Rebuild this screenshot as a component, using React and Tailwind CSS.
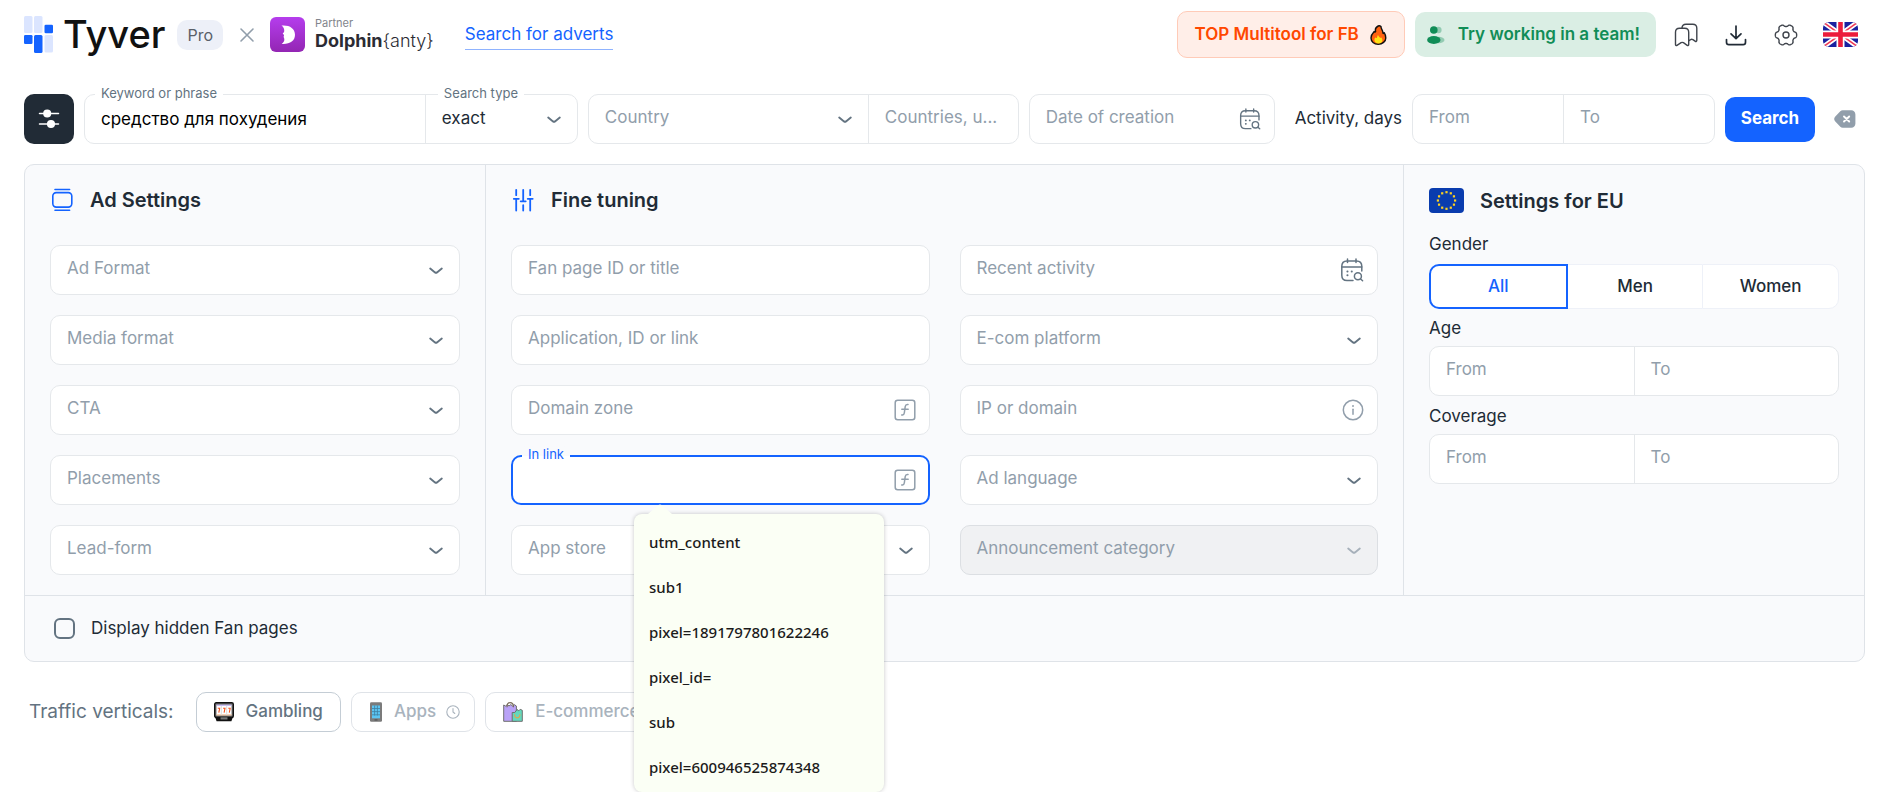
import { useId } from "react";

const FIELD = "h-[50px] w-full min-w-0 appearance-none bg-transparent pl-4 text-[17px] outline-none";
const FLOATING = "pointer-events-none absolute left-4 text-[17px] leading-[47px] whitespace-nowrap text-[#919eab] peer-focus:opacity-0";

/* ---------- icons ---------- */

function Chevron({ className = "text-[#637381]" }) {
  return (
    <svg className={className} width="16" height="16" viewBox="0 0 16 16" fill="none" stroke="currentColor" strokeWidth="1.9" strokeLinecap="round" strokeLinejoin="round">
      <path d="M2.2 5.6 7 9.4q1 .7 2 0l4.8-3.8" />
    </svg>
  );
}

function CalendarSearch({ size = 24 }) {
  return (
    <svg className="text-[#637381]" width={size} height={size} viewBox="0 0 24 24" fill="none" stroke="currentColor" strokeWidth="1.5" strokeLinecap="round">
      <path d="M7.5 1v3.4M16 1v3.4M1.8 8.9h19.9" />
      <path d="M21.8 13V8.3c0-3.4-1.7-5.3-5.3-5.3H7C3.4 3 1.8 4.9 1.8 8.3v8.9c0 3.4 1.6 5.3 5.2 5.3h6" />
      <circle cx="17.9" cy="18.3" r="3.5" />
      <path d="m20.6 21 2 1.7" />
      <path d="M7.4 13.5h.1M11.7 13.5h.1M7.4 17.3h.1" strokeWidth="2" />
    </svg>
  );
}

function FunctionIcon() {
  return (
    <svg className="text-[#919eab]" width="22" height="22" viewBox="0 0 22 22" fill="none" stroke="currentColor" strokeWidth="1.5" strokeLinecap="round" strokeLinejoin="round">
      <rect x="1.2" y="1.2" width="19.6" height="19.6" rx="2.5" />
      <path d="M14 5.6h-.6c-1.5 0-2 .8-2.2 2L10.3 14c-.2 1.3-.8 2.2-2.2 2h-.4M7.8 10.2h6.4" />
    </svg>
  );
}

function InfoIcon() {
  return (
    <svg className="text-[#919eab]" width="22" height="22" viewBox="0 0 22 22" fill="none" stroke="currentColor" strokeWidth="1.5" strokeLinecap="round">
      <circle cx="11" cy="11" r="9.7" />
      <path d="M11 10.3v5" />
      <path d="M11 7h.01" strokeWidth="1.9" />
    </svg>
  );
}

function BrandMark() {
  return (
    <svg width="29" height="37" viewBox="0 0 29 37">
      <g fill="#dbe5ff">
        <rect x="0" y="0" width="8.5" height="17" rx="1.5" />
        <rect x="10" y="0" width="8.5" height="17" rx="1.5" />
        <rect x="20.5" y="19" width="8.5" height="17.5" rx="1.5" />
      </g>
      <g fill="#1463ff">
        <rect x="20.5" y="8.7" width="8.5" height="8.5" rx="1.3" />
        <rect x="0" y="19" width="8.5" height="9" rx="1.3" />
        <rect x="10" y="19" width="8.5" height="18" rx="1.5" />
      </g>
    </svg>
  );
}

function DolphinMark() {
  return (
    <svg width="35" height="35" viewBox="0 0 35 35">
      <defs>
        <linearGradient id="dolphin" x1="0" y1="0" x2="0" y2="1">
          <stop offset="0" stopColor="#b53ded" />
          <stop offset="1" stopColor="#9326b3" />
        </linearGradient>
      </defs>
      <rect width="35" height="35" rx="6" fill="url(#dolphin)" />
      <path d="M11.5 8.5c7.5-.8 13.5 2.5 13.5 9.3 0 6.2-5.2 9.7-13.3 9.2 2-1.5 2.9-3 2.6-5.2-.2-1-.8-1.7-.6-2.6.1-.6.5-.9.3-1.3-.3-.5-1.2-.7-1.2-1.2 0-.6 1.2-.8 1.4-2.1.3-2.1-.5-4.7-2.7-6.1Z" fill="#fff" />
    </svg>
  );
}

function Fire() {
  return (
    <svg width="17" height="20" viewBox="0 0 17 20" strokeLinejoin="round">
      <path d="M8.2 1c-2 1-3.3 2.8-2.6 5.3C5.2 7 4.6 7.6 4.2 6.5 2.3 8.5 1 10.5 1 13c0 3.6 3 6.2 7.2 6.2S15.8 16.5 15.8 13c0-2-.6-3.8-1.6-5.3-.4.8-.9 1-1.2.4C12.8 4.8 10.8 3.8 11 1.5 10 .7 9 .6 8.2 1Z" fill="#ff6211" stroke="#111" strokeWidth="1.4" />
      <path d="M8.6 18.5c-2.8 0-4.2-1.7-4.2-3.7 0-1 .4-1.9 1-2.6.5 1 1.2 1.2 1.6.3.3-.9.3-2 1.1-2.6.3 1.5 1.3 1.9 2 2.8.4.5.6-.2.9-.5.8.8 1.4 1.8 1.4 2.8 0 2-1.4 3.5-3.8 3.5Z" fill="#ffe216" />
    </svg>
  );
}

function TeamIcon() {
  return (
    <svg width="18" height="18" viewBox="0 0 18 18" fill="#118d57">
      <g opacity=".35">
        <circle cx="11.3" cy="4" r="3.3" />
        <ellipse cx="11.5" cy="14" rx="6" ry="3.3" />
      </g>
      <circle cx="6.8" cy="4" r="3.8" />
      <ellipse cx="6.8" cy="14" rx="6.7" ry="3.9" />
    </svg>
  );
}

function Bookmarks() {
  return (
    <svg width="24" height="24" viewBox="0 0 24 24" fill="none" stroke="#3f444c" strokeWidth="1.4" strokeLinejoin="round" strokeLinecap="round">
      <path d="M1.5 9.2c0-2.6 1.4-4 4-4h5.2c2.6 0 4 1.4 4 4v12.2c0 1-.7 1.4-1.5.9l-3.8-2.6c-.8-.5-1.5-.5-2.3 0L3 22.3c-.8.5-1.5.1-1.5-.9Z" />
      <path d="M8 5.1C8.1 2.5 9.5 1.2 12 1.2h6.8c2.6 0 4 1.4 4 4v12c0 1.2-.8 1.6-1.7.9l-2.2-1.5c-.8-.4-1.5-.5-2.3 0l-1.7 1" />
    </svg>
  );
}

function Download() {
  return (
    <svg width="22" height="22" viewBox="0 0 22 22" fill="none" stroke="#212b36" strokeWidth="1.7" strokeLinejoin="round" strokeLinecap="round">
      <path d="M11 2v12.5M6 9.8l5 4.900 5-4.900M1.5 15.5v2.700c0 1.600.8 2.400 2.400 2.400h14.200c1.600 0 2.400-.8 2.400-2.400v-2.700" />
    </svg>
  );
}

const gearOutline =
  Array.from({ length: 144 }, (_, i) => {
    const a = (i / 144) * 2 * Math.PI;
    const r = 9.5 + 1.2 * Math.tanh(1.6 * Math.cos(6 * a) + 0.4);
    return `${i ? "L" : "M"}${(12 + r * Math.cos(a)).toFixed(2)} ${(12 + r * Math.sin(a)).toFixed(2)}`;
  }).join("") + "Z";

function Gear() {
  return (
    <svg width="24" height="24" viewBox="0 0 24 24" fill="none" stroke="#3f444c" strokeWidth="1.4" strokeLinejoin="round">
      <path d={gearOutline} />
      <circle cx="12" cy="12" r="3" />
    </svg>
  );
}

function UkFlag() {
  return (
    <svg className="rounded-md" width="35" height="25" viewBox="0 0 35 25">
      <rect width="35" height="25" fill="#1a22a0" />
      <path d="M0 0l35 25M35 0 0 25" stroke="#fff" strokeWidth="5" />
      <path d="M0 0l35 25M35 0 0 25" stroke="#ee3a55" strokeWidth="1.5" />
      <path d="M17.5 0v25M0 12.5h35" stroke="#fff" strokeWidth="8" />
      <path d="M17.5 0v25M0 12.5h35" stroke="#ec1c3c" strokeWidth="4.6" />
    </svg>
  );
}

function EuFlag() {
  const stars = Array.from({ length: 12 }, (_, i) => (i * Math.PI) / 6);
  return (
    <svg width="35" height="25" viewBox="0 0 35 25">
      <rect width="35" height="25" rx="4" fill="#0a3cae" />
      {stars.map((a) => (
        <rect key={a} x={16.4 + 8.6 * Math.sin(a)} y={11.4 - 8.3 * Math.cos(a)} width="2.2" height="2.2" fill="#ffd21f" />
      ))}
    </svg>
  );
}

function AdIcon() {
  return (
    <svg width="24" height="24" viewBox="0 0 24 24" fill="none" stroke="#1463ff" strokeWidth="1.6" strokeLinecap="round">
      <rect x="2.8" y="4.6" width="19" height="14.5" rx="3.5" />
      <path d="M5 1.5h14.6M5 22.2h14.6" />
    </svg>
  );
}

function TuneIcon() {
  return (
    <svg width="24" height="24" viewBox="0 0 24 24" fill="none" stroke="#1463ff" strokeWidth="1.8" strokeLinecap="round">
      <path d="M5.2 1.8v5.4M5.2 11v11.5M2.8 10.8h5M12.2 1.8v11.4M12.2 17.2v5.3M9.7 13.3h5M19.2 1.8v5.4M19.2 11v11.5M16.7 10.8h5" />
    </svg>
  );
}

function SliderIcon() {
  return (
    <svg width="22" height="22" viewBox="0 0 22 22" stroke="#fff" strokeWidth="1.5" strokeLinecap="round">
      <path d="M1.5 5.5h19M1.5 16h19" />
      <circle cx="9.2" cy="5.5" r="3.3" fill="#fff" />
      <circle cx="13" cy="16" r="3.3" fill="#fff" />
    </svg>
  );
}

function ClearIcon() {
  return (
    <svg width="22" height="18" viewBox="0 0 22 18">
      <path d="M6.3 1.2C7 .6 7.8.3 8.7.3h8.5c2.5 0 4.2 1.7 4.2 4.2v9c0 2.5-1.7 4.2-4.2 4.2H8.7c-.9 0-1.7-.3-2.4-.9L1.3 11.5c-1.5-1.5-1.5-3.5 0-5Z" fill="#919eab" />
      <path d="m10 6.5 5.2 5M15.2 6.5l-5.2 5" stroke="#fff" strokeWidth="1.9" strokeLinecap="round" />
    </svg>
  );
}

function SlotIcon() {
  return (
    <svg width="20" height="20" viewBox="0 0 20 20">
      <rect x=".7" y=".7" width="18.6" height="14.8" rx="1.5" fill="#777" stroke="#111" strokeWidth="1.4" />
      <rect x="2.5" y="3.3" width="15" height="10" fill="#fff" />
      <path d="M2.5 3.3h15" stroke="#c9bdf7" strokeWidth="1.3" />
      <path d="M2.5 12.9h15" stroke="#f5b98a" />
      <g stroke="#f4521e" strokeWidth="1.1" fill="none">
        <path d="M3.8 6.3h1.900L4.800 10.600M9.100 6.300h1.900l-.9 4.300M14.300 6.300h1.900l-.9 4.300" />
      </g>
      <path d="M7.3 4v9M12.7 4v9" stroke="#ddd" />
      <path d="M1 14.8h18l-1.6 4.5H2.6Z" fill="#111" />
      <rect x="6.5" y="15.3" width="7" height="2.2" fill="#777" />
    </svg>
  );
}

function PhoneIcon() {
  return (
    <svg width="20" height="20" viewBox="0 0 20 20">
      <rect x="4" y=".2" width="12" height="19.6" rx="1.3" fill="#7b7b7b" />
      <rect x="6" y="3.5" width="8" height="12.8" fill="#5cc5f2" />
      <path d="M8.6 3.5v10M11.4 3.5v10M6 6.5h8M6 9.6h8M6 12.8h8" stroke="#3f7fa0" strokeWidth=".8" />
      <rect x="8.5" y="17.3" width="3" height="1.3" fill="#555" />
    </svg>
  );
}

function BagsIcon() {
  return (
    <svg width="20" height="20" viewBox="0 0 20 20" strokeLinejoin="round">
      <path d="M.7 3 2.6 4l1.7-1.4L6 4l1.8-1.4L9.5 4l1.7-1.4L13.4 4v15.3H.7Z" fill="#b9a2f7" stroke="#6f6f6f" />
      <path d="M4 5.2C4 2 5 .7 7 .7S10.5 2 10.5 5.2" fill="none" stroke="#7a6d5c" strokeWidth="1.2" />
      <path d="M9.2 10.5h2.6l2.2-3 1.8 1.3 1.4-1.5 2.1 1v11H9.2Z" fill="#63d9bd" stroke="#6f6f6f" />
      <path d="M11.6 12.3c0 4.7 5.3 4.7 5.3 0" fill="none" stroke="#e8a24b" strokeWidth="1.1" />
    </svg>
  );
}

function ClockIcon() {
  return (
    <svg className="ml-0.5" width="14" height="14" viewBox="0 0 14 14" fill="none" stroke="#a9b3bd" strokeWidth="1.1" strokeLinecap="round">
      <circle cx="7" cy="7" r="6.2" />
      <path d="M7 3.5V7l1.8 1.5" />
    </svg>
  );
}

/* ---------- form parts ---------- */

function Shell({ children, className = "" }) {
  return <div className={`relative flex min-w-0 rounded-[10px] border border-[#e5e8eb] bg-white ${className}`}>{children}</div>;
}

function Input({ label, className = "flex-1" }) {
  const id = useId();
  return (
    <div className={`relative -my-px min-w-0 ${className}`}>
      <input id={id} type="text" className={`${FIELD} peer block`} />
      <label htmlFor={id} className={`${FLOATING} top-0`}>{label}</label>
    </div>
  );
}

function IconInput({ label, icon, className = "" }) {
  return (
    <Shell className={className}>
      <Input label={label} />
      <span className="flex items-center pr-[13px]">{icon}</span>
    </Shell>
  );
}

function Select({ label, disabled = false, className = "flex-1" }) {
  const id = useId();
  return (
    <div className={`relative -my-px flex min-w-0 items-center ${className}`}>
      <select id={id} defaultValue="" disabled={disabled} className={`${FIELD} disabled:opacity-100`}>
        <option value="" aria-label={label} />
      </select>
      <label htmlFor={id} className={`${FLOATING} top-0`}>{label}</label>
      <span className="pointer-events-none absolute right-[15px] pt-0.5">
        <Chevron className={disabled ? "text-[#a6b0ba]" : "text-[#637381]"} />
      </span>
    </div>
  );
}

function Range({ name }) {
  return (
    <fieldset className="min-w-0">
      <legend className="mb-1.5 text-[17px] leading-6">{name}</legend>
      <Shell>
        <Input label="From" />
        <Input label="To" className="flex-1 border-l border-[#e5e8eb]" />
      </Shell>
    </fieldset>
  );
}

function Heading({ icon, children }) {
  return (
    <h2 className="flex h-[35px] items-center gap-4 text-xl font-semibold">
      {icon}
      {children}
    </h2>
  );
}

const suggestions = ["utm_content", "sub1", "pixel=1891797801622246", "pixel_id=", "sub", "pixel=600946525874348"];

function InLinkField() {
  return (
    <div className="relative">
      <div className="flex items-center rounded-[10px] border-2 border-[#1463ff] bg-white">
        <input id="in-link" type="text" className="h-[46px] w-full min-w-0 bg-transparent pl-4 text-[17px] outline-none" />
        <span className="pr-3"><FunctionIcon /></span>
      </div>
      <label htmlFor="in-link" className="absolute -top-[9px] left-[11px] bg-linear-to-b from-[#f9fafc] from-60% to-white to-60% px-1.5 text-[13px] leading-4 text-[#1463ff]">
        In link
      </label>
      <div className="absolute top-[59px] left-[123px] z-10 w-[250px] rounded-lg bg-[#fbfff5] pt-1.5 pb-0.5 font-['Noto_Sans',sans-serif] text-[15px] font-medium text-[#1b1b1b] shadow-[0_0_4px_rgba(0,0,0,0.22)]">
        <svg className="absolute top-0 left-3.5 -translate-y-full" width="24" height="10" viewBox="0 0 24 10">
          <path d="M0 10 10.5 1q1.5-1.2 3 0L24 10Z" fill="#fbfff5" />
        </svg>
        <ul>
          {suggestions.map((s) => (
            <li key={s} className="flex h-[45px] items-center px-[15px]">{s}</li>
          ))}
        </ul>
      </div>
    </div>
  );
}

/* ---------- page sections ---------- */

function Header() {
  return (
    <header className="flex h-[47px] items-center">
      <BrandMark />
      <span className="ml-2.5 text-[38px] leading-[47px] font-medium text-[#111]">Tyver</span>
      <span className="ml-3 rounded-[10px] bg-[#edf0f8] px-2.5 py-[3px] text-base text-[#5a5f69]">Pro</span>
      <svg className="ml-4 shrink-0" width="16" height="16" viewBox="0 0 16 16" stroke="#919eab" strokeWidth="1.6" strokeLinecap="round">
        <path d="m2 2 12 12M14 2 2 14" />
      </svg>
      <div className="ml-[15px] flex items-center gap-2.5">
        <DolphinMark />
        <div className="flex flex-col">
          <span className="text-[11px] leading-3 text-[#82858c]">Partner</span>
          <span className="text-lg leading-6 font-light text-[#2b2b33]"><b className="font-bold">Dolphin</b>{"{anty}"}</span>
        </div>
      </div>
      <a href="#search" className="ml-[31px] border-b border-[#8fb3ff] text-[17px] leading-[30px] text-[#1463ff]">Search for adverts</a>
      <nav className="ml-auto flex items-center pr-[7px]">
        <button className="flex h-[47px] items-center gap-[11px] rounded-[10px] border border-[#ffcbb8] bg-[#ffeee8] px-[17px] text-[17px] font-semibold text-[#ff4800]">
          TOP Multitool for FB <Fire />
        </button>
        <button className="ml-2.5 flex h-[45px] items-center gap-[13px] rounded-[10px] bg-[#daeee4] pr-4 pl-3 text-[17px] font-semibold text-[#118d57]">
          <TeamIcon /> Try working in a team!
        </button>
        <button aria-label="Bookmarks" className="ml-[5px] flex size-[50px] items-center justify-center"><Bookmarks /></button>
        <button aria-label="Downloads" className="flex size-[50px] items-center justify-center"><Download /></button>
        <button aria-label="Settings" className="flex size-[50px] items-center justify-center"><Gear /></button>
        <button aria-label="Language" className="ml-3"><UkFlag /></button>
      </nav>
    </header>
  );
}

function SearchBar() {
  return (
    <form className="mt-9 flex items-center gap-2.5" onSubmit={(e) => e.preventDefault()}>
      <button type="button" aria-label="Filters" className="flex size-[50px] shrink-0 items-center justify-center rounded-[10px] bg-[#212b36]">
        <SliderIcon />
      </button>
      <Shell className="flex-[492]">
        <div className="relative -my-px min-w-0 flex-[342]">
          <label htmlFor="keyword" className="absolute -top-[9px] left-2.5 bg-white px-1.5 text-[13px] leading-4 text-[#637381]">Keyword or phrase</label>
          <input id="keyword" type="text" defaultValue="средство для похудения" className={`${FIELD} pb-px text-black`} />
        </div>
        <div className="relative -my-px flex min-w-0 flex-[152] items-center border-l border-[#e5e8eb]">
          <label htmlFor="type" className="absolute -top-[9px] left-3 bg-white px-1.5 text-[13px] leading-4 text-[#637381]">Search type</label>
          <select id="type" className={FIELD}>
            <option>exact</option>
          </select>
          <span className="pointer-events-none absolute right-[15px] pt-0.5"><Chevron /></span>
        </div>
      </Shell>
      <Shell className="flex-[429]">
        <Select label="Country" className="flex-[281]" />
        <Input label="Countries, u..." className="flex-[150] border-l border-[#e5e8eb]" />
      </Shell>
      <IconInput className="flex-[244]" label="Date of creation" icon={<CalendarSearch size={22} />} />
      <span className="ml-2.5 shrink-0 text-[17px]">Activity, days</span>
      <Shell className="flex-[301]">
        <Input label="From" />
        <Input label="To" className="flex-1 border-l border-[#e5e8eb]" />
      </Shell>
      <button type="submit" className="h-[45px] w-[90px] shrink-0 rounded-[10px] bg-[#1463ff] text-[17px] font-bold text-white">Search</button>
      <button type="button" aria-label="Clear" className="flex h-10 w-10 shrink-0 items-center justify-center"><ClearIcon /></button>
    </form>
  );
}

function Settings() {
  return (
    <section className="mt-5 rounded-[10px] border border-[#dfe3e8] bg-[#f9fafc]">
      <div className="grid grid-cols-[461fr_918fr_460fr] border-b border-[#dfe3e8]">
        <div className="min-w-0 border-r border-[#dfe3e8] px-[25px] pt-[17px] pb-5">
          <Heading icon={<AdIcon />}>Ad Settings</Heading>
          <div className="mt-7 flex flex-col gap-5">
            {["Ad Format", "Media format", "CTA", "Placements", "Lead-form"].map((l) => (
              <Shell key={l}><Select label={l} /></Shell>
            ))}
          </div>
        </div>
        <div className="min-w-0 border-r border-[#dfe3e8] px-[25px] pt-[17px] pb-5">
          <Heading icon={<TuneIcon />}>Fine tuning</Heading>
          <div className="mt-7 grid grid-cols-2 gap-x-[30px] gap-y-5">
            <Shell><Input label="Fan page ID or title" /></Shell>
            <IconInput label="Recent activity" icon={<CalendarSearch />} />
            <Shell><Input label="Application, ID or link" /></Shell>
            <Shell><Select label="E-com platform" /></Shell>
            <IconInput label="Domain zone" icon={<FunctionIcon />} />
            <IconInput label="IP or domain" icon={<InfoIcon />} />
            <InLinkField />
            <Shell><Select label="Ad language" /></Shell>
            <Shell><Select label="App store" /></Shell>
            <div className="relative flex min-w-0 rounded-[10px] border border-[#dcdfe3] bg-[#f0f1f3]"><Select label="Announcement category" disabled /></div>
          </div>
        </div>
        <div className="min-w-0 px-[25px] pt-[18px] pb-5">
          <Heading icon={<EuFlag />}>Settings for EU</Heading>
          <fieldset className="mt-3.5 min-w-0">
            <legend className="mb-2 text-[17px] leading-6">Gender</legend>
            <div className="flex h-[45px]">
              <button className="flex-1 rounded-l-[10px] border-2 border-[#1463ff] bg-white text-[17px] font-medium text-[#1463ff]">All</button>
              <button className="flex-1 border-y border-[#eef1f8] bg-white text-[17px] font-medium">Men</button>
              <button className="flex-1 rounded-r-[10px] border border-[#eef1f8] bg-white text-[17px] font-medium">Women</button>
            </div>
          </fieldset>
          <div className="mt-[7px] flex flex-col gap-2">
            <Range name="Age" />
            <Range name="Coverage" />
          </div>
        </div>
      </div>
      <label className="flex h-[65px] items-center gap-4 pl-[29px] text-[17px]">
        <input type="checkbox" className="size-[21px] appearance-none rounded-[6px] border-2 border-[#637381] bg-transparent checked:bg-[#1463ff]" />
        Display hidden Fan pages
      </label>
    </section>
  );
}

function Verticals() {
  return (
    <div className="mt-[30px] flex items-center gap-2.5 pl-[5px]">
      <span className="mr-3 text-[19px] text-[#637381]">Traffic verticals:</span>
      <button className="flex h-10 items-center gap-3 rounded-[10px] border border-[#c4cdd5] bg-white px-[17px] text-[17px] font-medium text-[#637381]">
        <SlotIcon /> Gambling
      </button>
      <button className="flex h-10 items-center gap-2 rounded-[10px] border border-[#dfe3e8] bg-white px-3.5 text-[17px] font-medium text-[#a9b3bd]">
        <PhoneIcon /> Apps <ClockIcon />
      </button>
      <button className="flex h-10 items-center gap-3 rounded-[10px] border border-[#dfe3e8] bg-white px-[17px] text-[17px] font-medium text-[#a9b3bd]">
        <BagsIcon /> E-commerce
      </button>
    </div>
  );
}

export default function App() {
  return (
    <main className="min-h-screen overflow-hidden bg-white pt-[11px] pr-8 pl-6 font-['Inter',sans-serif] text-[#212b36]">
      <Header />
      <SearchBar />
      <Settings />
      <Verticals />
    </main>
  );
}
